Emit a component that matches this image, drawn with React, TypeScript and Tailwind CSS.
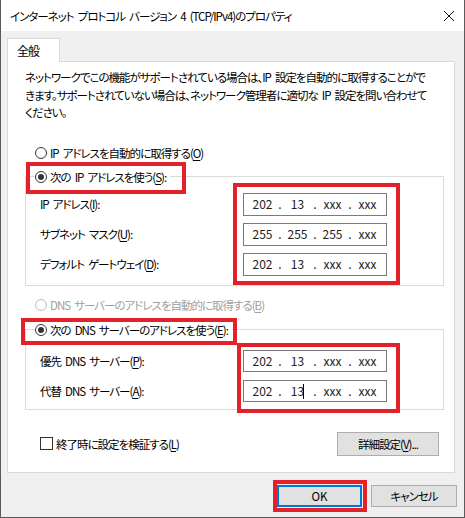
import React from "react";

function Radio({ checked, disabled }: { checked?: boolean; disabled?: boolean }) {
  return (
    <span
      className={`flex h-[12px] w-[12px] shrink-0 items-center justify-center rounded-full border bg-white ${
        disabled ? "border-[#bcbcbc]" : "border-[#333]"
      }`}
    >
      {checked && <span className="h-[6px] w-[6px] rounded-full bg-[#333]" />}
    </span>
  );
}

function Acc({ k }: { k: string }) {
  return <span className="underline underline-offset-2">{k}</span>;
}

function IpField({ parts, h = 23, cursorAfter }: { parts: string[]; h?: number; cursorAfter?: number }) {
  return (
    <div
      className={`flex w-[144px] items-center border border-[#7a7a7a] bg-white pl-[4px] text-[12px] tracking-normal text-[#222] ${
        h === 23 ? "h-[23px]" : "h-[22px]"
      }`}
    >
      {parts.map((p, i) => (
        <React.Fragment key={i}>
          <span className="relative w-[29px] text-center">
            {p}
            {cursorAfter === i && (
              <span className="absolute right-[8px] top-[1px] h-[15px] w-px bg-black" />
            )}
          </span>
          {i < 3 && <span className="w-[6px] text-center">.</span>}
        </React.Fragment>
      ))}
    </div>
  );
}

function Row({ label, children }: { label: React.ReactNode; children: React.ReactNode }) {
  return (
    <div className="flex items-center">
      <span className="w-[203px]">{label}</span>
      {children}
    </div>
  );
}

function Btn({ children, primary, className }: { children: React.ReactNode; primary?: boolean; className?: string }) {
  return (
    <div
      className={`flex h-[22px] items-center justify-center bg-[#e1e1e1] ${
        primary ? "border-2 border-[#0078d7]" : "border border-[#adadad]"
      } ${className ?? ""}`}
    >
      {children}
    </div>
  );
}

export default function App() {
  return (
    <div className="relative h-[518px] w-[465px] overflow-hidden border-x border-b border-[#5a5a5a] bg-[#f0f0f0] font-['Noto_Sans_CJK_JP','Noto_Sans_CJK_SC',sans-serif] text-[11.5px] leading-[16px] tracking-[-1px] text-black [font-feature-settings:'palt'] [word-spacing:2.5px]">
      {/* title bar */}
      <div className="flex h-[31px] items-center justify-between bg-white pl-[9px] pr-[8px]">
        <span>インターネット プロトコル バージョン 4 (TCP/IPv4)のプロパティ</span>
        <svg width="12" height="12" viewBox="0 0 12 12" className="mr-[1px]">
          <path d="M1 1L11 11M11 1L1 11" stroke="#111" strokeWidth="1" />
        </svg>
      </div>

      {/* tabs */}
      <div className="pl-[6px] pr-[9px] pt-[7px]">
        <div className="relative z-10 -mb-px flex h-[24px] w-[53px] items-center border border-b-0 border-[#d9d9d9] bg-white pl-[9px] text-[12px]">
          全般
        </div>
        <div className="h-[412px] border border-[#d9d9d9] bg-white pl-[17px] pr-[10px] pt-[7px]">
          <p className="whitespace-nowrap leading-[17.5px]">
            ネットワークでこの機能がサポートされている場合は、IP 設定を自動的に取得することがで
            <br />
            きます。サポートされていない場合は、ネットワーク管理者に適切な IP 設定を問い合わせて
            <br />
            ください。
          </p>

          <div className="mt-[23px] flex h-[16px] items-center gap-[3px] pl-[10px]">
            <Radio />
            <span>
              IP アドレスを自動的に取得する(<Acc k="O" />)
            </span>
          </div>

          <fieldset className="mt-[8px] border border-[#dcdcdc] p-0">
            <legend className="ml-[9px] flex h-[16px] items-center gap-[3px] pr-[4px]">
              <Radio checked />
              <span>
                次の IP アドレスを使う(<Acc k="S" />):
              </span>
            </legend>
            <div className="flex flex-col gap-[7px] pb-[9px] pl-[14px] pt-[8px]">
              <Row label={<>IP アドレス(<Acc k="I" />):</>}>
                <IpField parts={["202", "13", "xxx", "xxx"]} />
              </Row>
              <Row label={<>サブネット マスク(<Acc k="U" />):</>}>
                <IpField parts={["255", "255", "255", "xxx"]} />
              </Row>
              <Row label={<>デフォルト ゲートウェイ(<Acc k="D" />):</>}>
                <IpField parts={["202", "13", "xxx", "xxx"]} />
              </Row>
            </div>
          </fieldset>

          <div className="mt-[11px] flex h-[16px] items-center gap-[3px] pl-[10px] text-[#a0a0a0]">
            <Radio disabled />
            <span>
              DNS サーバーのアドレスを自動的に取得する(<Acc k="B" />)
            </span>
          </div>

          <fieldset className="mt-[9px] border border-[#dcdcdc] p-0">
            <legend className="ml-[9px] flex h-[16px] items-center gap-[3px] pr-[4px]">
              <Radio checked />
              <span>
                次の DNS サーバーのアドレスを使う(<Acc k="E" />):
              </span>
            </legend>
            <div className="flex flex-col gap-[8px] pb-[7px] pl-[14px] pt-[12px]">
              <Row label={<>優先 DNS サーバー(<Acc k="P" />):</>}>
                <IpField h={22} parts={["202", "13", "xxx", "xxx"]} />
              </Row>
              <Row label={<>代替 DNS サーバー(<Acc k="A" />):</>}>
                <IpField h={22} parts={["202", "13", "xxx", "xxx"]} cursorAfter={1} />
              </Row>
            </div>
          </fieldset>

          <div className="mt-[22px] flex h-[24px] items-center justify-between pl-[15px] pr-[5px]">
            <div className="flex items-center gap-[3px]">
              <span className="h-[13px] w-[13px] border border-[#333] bg-white" />
              <span>
                終了時に設定を検証する(<Acc k="L" />)
              </span>
            </div>
            <Btn className="h-[24px] w-[102px]">
              詳細設定(<Acc k="V" />)...
            </Btn>
          </div>
        </div>
      </div>

      {/* footer */}
      <div className="mt-[12px] flex justify-end gap-[9px] pr-[7px]">
        <Btn primary className="w-[85px] tracking-normal">
          OK
        </Btn>
        <Btn className="w-[86px]">キャンセル</Btn>
      </div>

      {/* red annotation boxes */}
      <div className="absolute left-[25px] top-[162px] h-[32px] w-[160px] border-4 border-[#e3212b]" />
      <div className="absolute left-[232px] top-[183px] h-[102px] w-[167px] border-4 border-[#e3212b]" />
      <div className="absolute left-[20px] top-[318px] h-[27px] w-[216px] border-4 border-[#e3212b]" />
      <div className="absolute left-[236px] top-[343px] h-[70px] w-[163px] border-4 border-[#e3212b]" />
      <div className="absolute left-[272px] top-[480px] h-[32px] w-[94px] border-4 border-[#e3212b]" />
    </div>
  );
}
